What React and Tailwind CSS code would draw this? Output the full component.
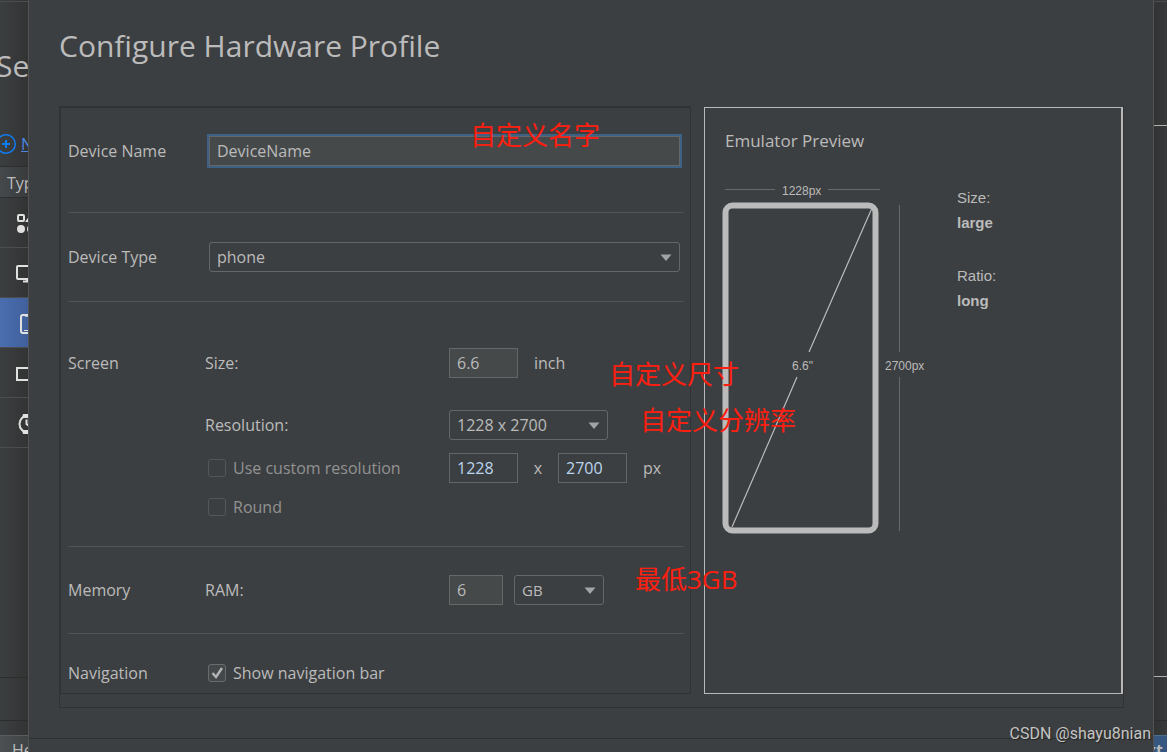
import React from 'react';

const CATEGORIES = [
  {
    id: 'all',
    icon: (
      <>
        <rect x="2" y="3" width="6" height="6" rx="1" />
        <path d="M15.5 2.5 L20 9 H11 Z" />
        <circle cx="5" cy="17" r="3" fill="currentColor" />
        <circle cx="15" cy="17" r="3" fill="currentColor" />
      </>
    ),
  },
  {
    id: 'desktop',
    icon: (
      <>
        <rect x="1" y="4" width="20" height="13" rx="1" />
        <path d="M7 19.5 H15 M11 17 V19" />
      </>
    ),
  },
  {
    id: 'phone',
    icon: (
      <>
        <rect x="5" y="3" width="13" height="18" rx="2" />
        <path d="M8 18.5 H15" strokeWidth="1" />
        <path d="M9 3.5 H14" strokeWidth="2.5" />
      </>
    ),
  },
  {
    id: 'tv',
    icon: <rect x="1" y="6" width="22" height="12" />,
  },
  {
    id: 'wear',
    icon: (
      <>
        <circle cx="12" cy="12" r="8.5" />
        <path d="M7 2 H17 L18 6 H6 Z M6 18 H18 L17 22 H7 Z" fill="currentColor" stroke="none" />
        <path d="M10.5 7.5 V12 L14 15" />
      </>
    ),
  },
];

function Sidebar() {
  return (
    <aside className="w-7 shrink-0 overflow-hidden bg-linear-to-r from-[#3c3f41] to-[#323333] flex flex-col">
      <div className="h-px mt-px bg-[#4c4d4e] shrink-0" />
      <div className="mt-11 -ml-1 text-[30px] leading-10 whitespace-nowrap">Se</div>
      <div className="mt-12 h-5 shrink-0 flex items-center gap-[5px] text-base text-[#4a88e0]">
        <svg className="w-4 h-5 shrink-0" viewBox="0 0 16 20" fill="none" stroke="#0f7bf5">
          <circle cx="6" cy="10" r="9.25" strokeWidth="1.5" />
          <path d="M2 10 H10 M6 6 V14" strokeWidth="2" />
        </svg>
        <a href="#new" className="underline">N</a>
      </div>
      <div className="mt-3 h-8 shrink-0 border-y border-[#2d2e2f] bg-linear-to-r from-[#45494b] to-[#393b3c] pl-[7px] pt-0.5 flex items-center text-base">
        Typ
      </div>
      {CATEGORIES.map(({ id, icon }) => (
        <div
          key={id}
          className={`h-[50px] shrink-0 pl-4 pt-0.5 flex items-center border-b border-[#4b4d4e] ${id === 'phone' ? 'bg-linear-to-r from-[#4b6eaf] to-[#40609c]' : ''}`}
        >
          <svg className="w-6 h-6 shrink-0 text-[#e0e0e0]" viewBox="0 0 24 24" fill="none" stroke="currentColor" strokeWidth="2">
            {icon}
          </svg>
        </div>
      ))}
      <div className="flex-1" />
      <div className="h-11 shrink-0 border-y border-[#2c2c2c]" />
      <div className="mt-3.5 h-[17px] shrink-0 overflow-hidden border-t border-[#5a5d5f] bg-linear-to-r from-[#4c5052] to-[#414445] pl-3 pt-0.5 text-base">
        He
      </div>
    </aside>
  );
}

function RightEdge() {
  return (
    <div className="w-[13px] shrink-0 overflow-hidden bg-linear-to-r from-[#323333] to-[#38393a] flex flex-col">
      <div className="h-px mt-px bg-[#4c4d4e] shrink-0" />
      <div className="mt-[123px] flex-1 border-y border-[#b0b0b0]" />
      <div className="h-11 shrink-0 border-b border-[#2c2c2c]" />
      <div className="mt-3.5 h-[17px] shrink-0 overflow-hidden border-t border-[#4c708c] bg-[#365880] pt-0.5 flex justify-end pr-1 text-base font-bold">
        xt
      </div>
    </div>
  );
}

function Section({ title, htmlFor, className, children }) {
  return (
    <section className={`flex ${className}`}>
      <label htmlFor={htmlFor} className="w-[137px] h-[30px] shrink-0 leading-[30px]">{title}</label>
      <div className="flex-1 min-w-0">{children}</div>
    </section>
  );
}

function Field({ title, htmlFor, className = '', children }) {
  return (
    <div className={`relative flex items-center h-[30px] ${className}`}>
      <label htmlFor={htmlFor} className="w-[244px] shrink-0">{title}</label>
      {children}
    </div>
  );
}

function Select({ id, label, value, className = '' }) {
  return (
    <div className={`relative h-[30px] ${className}`}>
      <select
        id={id}
        aria-label={label}
        defaultValue={value}
        className="appearance-none block w-full h-full pl-[7px] pr-8 rounded-[3px] border border-[#646668] bg-[#3c3f41] outline-none"
      >
        <option>{value}</option>
      </select>
      <svg className="absolute right-2 top-3 w-3 h-2 pointer-events-none" viewBox="0 0 12 8" fill="#a0a4a7">
        <path d="M0.5 0.5 H11.5 L6 7 Z" />
      </svg>
    </div>
  );
}

function TextBox({ className, ...props }) {
  return (
    <input
      type="text"
      className={`h-[30px] shrink-0 pl-[7px] border border-[#646668] outline-none ${className}`}
      {...props}
    />
  );
}

function Checkbox({ label, disabled, checked = false }) {
  return (
    <label className={`relative flex items-center gap-[7px] pl-[3px] w-[244px] ${disabled ? 'text-[#929292]' : ''}`}>
      <input
        type="checkbox"
        defaultChecked={checked}
        disabled={disabled}
        className="appearance-none w-[18px] h-[18px] rounded-[3px] border border-[#545658] checked:border-[#6b6b6b] checked:bg-[#43494a]"
      />
      {checked && (
        <svg className="absolute left-[3px] w-[18px] h-[18px] pointer-events-none" viewBox="0 0 18 18" fill="none" stroke="#b4b4b4" strokeWidth="2.4">
          <path d="M4.5 9 L8 13 L14 4" />
        </svg>
      )}
      <span>{label}</span>
    </label>
  );
}

// Red remark laid over the form
function Note({ className, children }) {
  return (
    <span className={`absolute z-10 whitespace-nowrap text-[26px] leading-8 text-[#ff1e10] pointer-events-none ${className}`}>
      {children}
    </span>
  );
}

function ProfileForm() {
  return (
    <form className="flex-1 min-w-0 border border-t-2 border-[#313233] pl-[7px] pr-1.5">
      <Section title="Device Name" htmlFor="name" className="relative pt-7 pb-[46px] border-b border-[#515355]">
        <TextBox id="name" defaultValue="DeviceName" className="ml-1 w-[calc(100%-8px)] bg-[#45494a] ring-2 ring-[#3d6185] border-[#466d94]" />
        <Note className="left-[402px] top-[11px]">自定义名字</Note>
      </Section>

      <Section title="Device Type" htmlFor="type" className="pt-[29px] pb-[29px] border-b border-[#515355]">
        <Select id="type" value="phone" className="ml-1 mr-1" />
      </Section>

      <Section title="Screen" htmlFor="size" className="pt-[46px] pb-6 border-b border-[#515355]">
        <Field title="Size:" htmlFor="size">
          <TextBox id="size" defaultValue="6.6" className="w-[69px] bg-[#45494a]" />
          <span className="ml-4">inch</span>
          <Note className="left-[404px] top-2.5">自定义尺寸</Note>
        </Field>
        <Field title="Resolution:" htmlFor="resolution" className="mt-8">
          <Select id="resolution" value="1228 x 2700" className="w-[159px]" />
          <Note className="left-[435px] -top-1.5">自定义分辨率</Note>
        </Field>
        <div className="mt-[13px] h-[30px] flex items-center">
          <Checkbox label="Use custom resolution" disabled />
          <TextBox aria-label="Width" defaultValue="1228" className="w-[69px] text-[#bbd4ee]" />
          <span className="w-10 text-center">x</span>
          <TextBox aria-label="Height" defaultValue="2700" className="w-[69px] text-[#bbd4ee]" />
          <span className="ml-4">px</span>
        </div>
        <div className="mt-[9px] h-[30px] flex items-center">
          <Checkbox label="Round" disabled />
        </div>
      </Section>

      <Section title="Memory" htmlFor="ram" className="pt-7 pb-7 border-b border-[#515355]">
        <Field title="RAM:" htmlFor="ram">
          <TextBox id="ram" defaultValue="6" className="w-[54px] bg-[#45494a]" />
          <Select id="unit" label="Unit" value="GB" className="ml-[11px] w-[90px] text-[15px]" />
          <Note className="left-[430px] -top-3">最低3GB</Note>
        </Field>
      </Section>

      <Section title="Navigation" className="pt-6 pb-[5px]">
        <div className="h-[30px] flex items-center">
          <Checkbox label="Show navigation bar" checked />
        </div>
      </Section>
    </form>
  );
}

function EmulatorPreview() {
  return (
    <section className="w-[419px] shrink-0 mt-px border border-r-2 border-[#b9b9b9] pl-[17px] pt-[19px]">
      <h2 className="pl-[3px] text-[17px] leading-7">Emulator Preview</h2>
      <div className="mt-7 flex gap-[29px] font-['Liberation_Sans',sans-serif]">
        <svg className="w-[206px] h-[352px] shrink-0" viewBox="0 0 206 352" fill="none">
          <path d="M3 6.5 H53 M106 6.5 H158 M177.5 22 V169 M177.5 194 V348" stroke="#66686a" />
          <rect x="3.5" y="22.5" width="150" height="325" rx="7" stroke="#bbbbbb" strokeWidth="6" />
          <path d="M150 25 L87 169 M75 194 L10 344" stroke="#bbbbbb" strokeWidth="1.2" />
          <g fill="#bbbbbb" fontSize="12">
            <text x="60" y="12">1228px</text>
            <text x="70" y="187">6.6"</text>
            <text x="163" y="187">2700px</text>
          </g>
        </svg>
        <dl className="pt-0.5 text-[15px] leading-[25px]">
          <dt>Size:</dt>
          <dd className="font-bold">large</dd>
          <dt className="mt-7">Ratio:</dt>
          <dd className="font-bold">long</dd>
        </dl>
      </div>
    </section>
  );
}

export default function App() {
  return (
    <div className="flex h-screen overflow-hidden bg-[#3c3f41] text-base text-[#bbbbbb] font-['Open_Sans','Noto_Sans_CJK_SC',sans-serif]">
      <Sidebar />
      <main className="relative flex-1 min-w-0 border-x border-[#515355] flex flex-col">
        <div className="px-[30px] pt-[26px]">
          <h1 className="text-[30px] leading-10">Configure Hardware Profile</h1>
          <div className="mt-10 pb-[13px] border border-t-0 border-[#313233] flex gap-[13px] -mr-px">
            <ProfileForm />
            <EmulatorPreview />
          </div>
        </div>
        <footer className="mt-[30px] flex-1 border-t border-[#2f3031]" />
        <span className="absolute right-0.5 bottom-2 text-base leading-5 text-[#c4c4c4] font-['Roboto',sans-serif] [text-shadow:1px_1px_1px_#222]">
          CSDN @shayu8nian
        </span>
      </main>
      <RightEdge />
    </div>
  );
}
